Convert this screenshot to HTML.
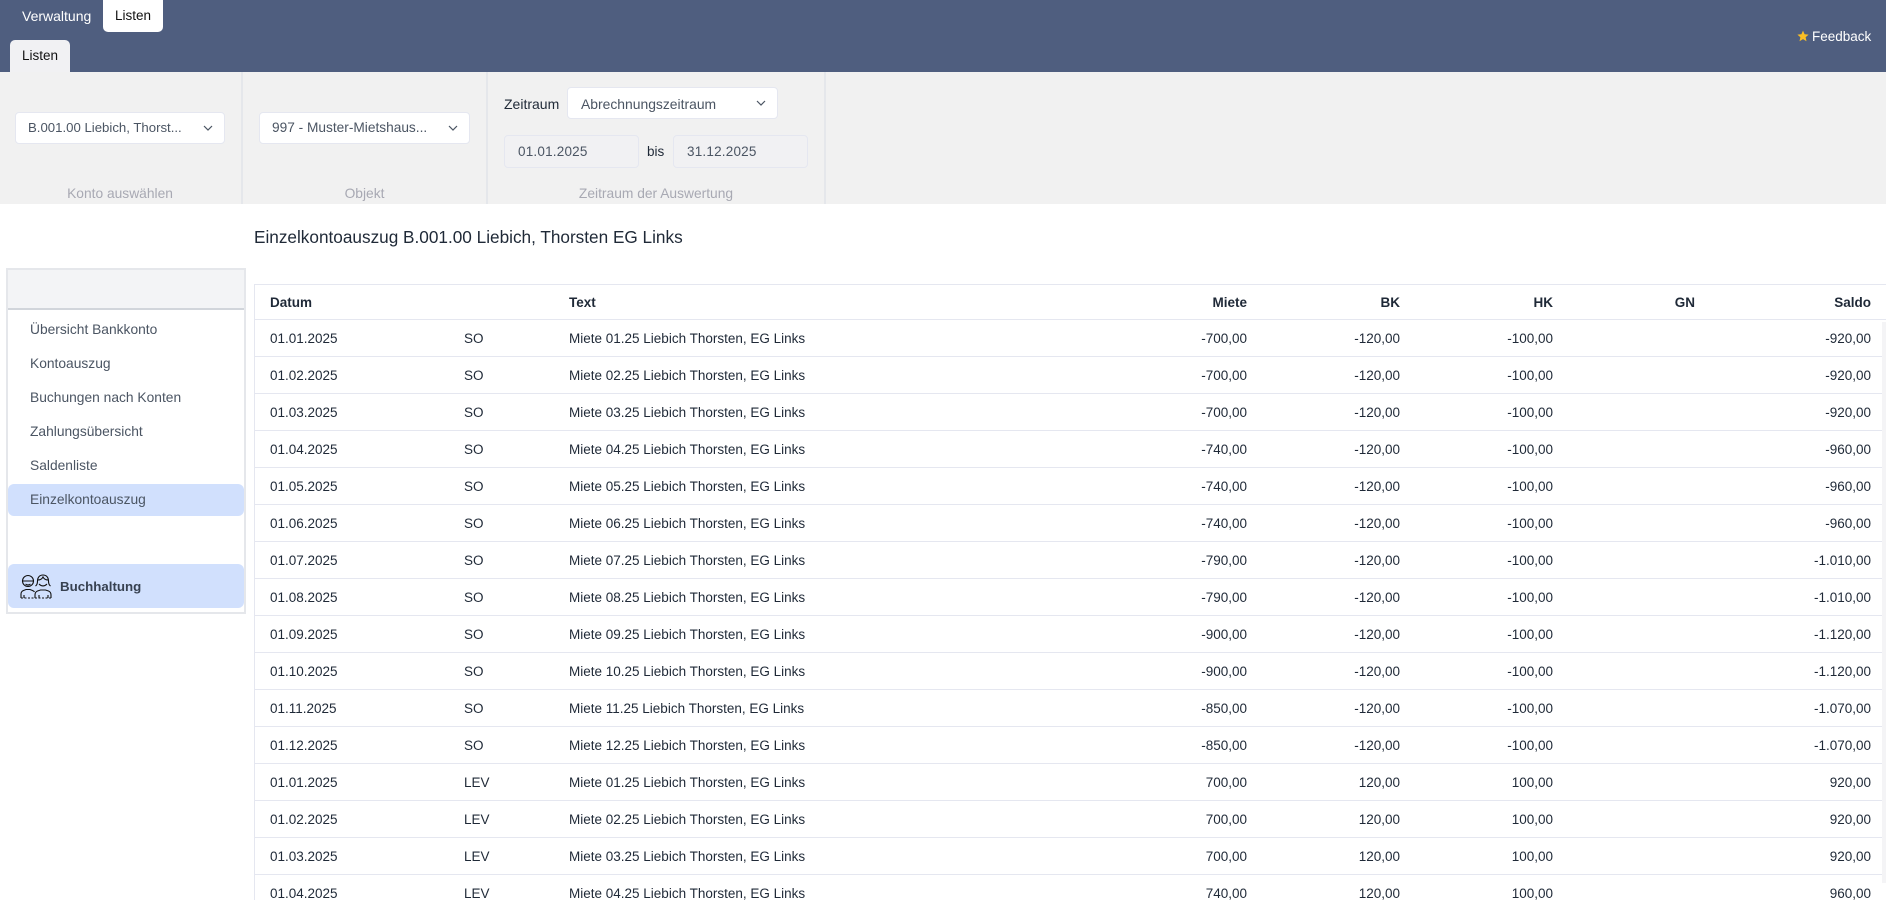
<!DOCTYPE html>
<html lang="de">
<head>
<meta charset="utf-8">
<title>Einzelkontoauszug</title>
<style>
*{box-sizing:border-box}
html,body{margin:0;padding:0;width:1886px;height:900px;overflow:hidden;background:#fff}
body{font-family:"Liberation Sans",sans-serif;font-size:13.5px;color:#1f2937;position:relative}
.a{position:absolute;white-space:nowrap}
.sel{position:absolute;background:#fff;border:1px solid #e5e7f0;border-radius:4px;height:32px;line-height:30px;padding-left:12px;color:#4b5563;font-size:13.2px}
.sel svg{position:absolute;right:11px;top:11px}
.inp{position:absolute;background:#f1f1f3;border:1px solid #e5e7f0;border-radius:4px;width:135px;height:33px;line-height:31px;padding-left:13px;color:#4b5563;font-size:13.5px;letter-spacing:.2px}
.cap{position:absolute;text-align:center;color:#a8a9b3;font-size:13.8px;top:186px}
.div{position:absolute;top:72px;height:132px;width:2px;background:#e5e7eb}
.nav{position:absolute;left:30px;color:#4b5563;font-size:13.8px;white-space:nowrap}
table{position:absolute;left:254px;top:284px;width:1632px;border-collapse:separate;border-spacing:0;table-layout:fixed;border-top:1px solid #e5e7f0;border-left:1px solid #e5e7f0}
th,td{padding:0 14px 0 15px;height:37px;border-bottom:1px solid #e5e7f0;text-align:left;white-space:nowrap;font-size:13.5px;color:#1f2937;overflow:hidden}
th{height:35px;font-weight:bold;color:#1f2937}
.r{text-align:right}
th:last-child,td:last-child{padding-right:16px}
</style>
</head>
<body>
<div class="a" style="left:0;top:0;width:1886px;height:72px;background:#4f5e7f"></div>
<div class="a" style="left:22px;top:8px;color:#fff;font-size:14px">Verwaltung</div>
<div class="a" style="left:103px;top:0;width:60px;height:32px;background:#fff;border-radius:0 0 5px 5px;text-align:center;line-height:32px;color:#111;font-size:13.5px">Listen</div>
<div class="a" style="left:10px;top:40px;width:60px;height:32px;background:#f1f1f3;border-radius:5px 5px 0 0;text-align:center;line-height:32px;color:#111;font-size:13.5px">Listen</div>
<svg class="a" style="left:1797px;top:30px" width="12" height="12" viewBox="0 0 12 12"><path d="M6 .6 7.600 4.300 11.600 4.600 8.600 7.200 9.500 11.200 6 9.100 2.500 11.200 3.400 7.200 .4 4.600 4.400 4.300Z" fill="#fbbf24"/></svg>
<div class="a" style="left:1812px;top:29px;color:#fff;font-size:13.5px">Feedback</div>

<div class="a" style="left:0;top:72px;width:1886px;height:132px;background:#f1f1f1"></div>
<div class="div" style="left:241px"></div>
<div class="div" style="left:486px"></div>
<div class="div" style="left:824px"></div>

<div class="sel" style="left:15px;top:112px;width:210px">B.001.00 Liebich, Thorst...<svg width="10" height="8" viewBox="0 0 10 8"><path d="M1 2 5 6 9 2" fill="none" stroke="#4b5563" stroke-width="1.2"/></svg></div>
<div class="sel" style="left:259px;top:112px;width:211px;font-size:13.7px">997 - Muster-Mietshaus...<svg width="10" height="8" viewBox="0 0 10 8"><path d="M1 2 5 6 9 2" fill="none" stroke="#4b5563" stroke-width="1.2"/></svg></div>
<div class="a" style="left:504px;top:96px;color:#1f2937;font-size:14px">Zeitraum</div>
<div class="sel" style="left:567px;top:87px;width:211px;font-size:13.9px;line-height:32px;padding-left:13px">Abrechnungszeitraum<svg width="10" height="8" viewBox="0 0 10 8"><path d="M1 2 5 6 9 2" fill="none" stroke="#4b5563" stroke-width="1.2"/></svg></div>
<div class="inp" style="left:504px;top:135px">01.01.2025</div>
<div class="a" style="left:647px;top:144px;color:#1f2937;font-size:13.5px">bis</div>
<div class="inp" style="left:673px;top:135px">31.12.2025</div>
<div class="cap" style="left:0;width:240px">Konto auswählen</div>
<div class="cap" style="left:243px;width:243px">Objekt</div>
<div class="cap" style="left:488px;width:336px">Zeitraum der Auswertung</div>

<div class="a" style="left:254px;top:227px;font-size:17.2px;color:#1f2937">Einzelkontoauszug B.001.00 Liebich, Thorsten EG Links</div>

<div class="a" style="left:6px;top:268px;width:240px;height:346px;border:2px solid #e5e7eb;background:#fff"></div>
<div class="a" style="left:8px;top:270px;width:236px;height:40px;background:#f3f4f6;border-bottom:2px solid #d1d5db"></div>
<div class="nav" style="top:322px">Übersicht Bankkonto</div>
<div class="nav" style="top:356px">Kontoauszug</div>
<div class="nav" style="top:390px">Buchungen nach Konten</div>
<div class="nav" style="top:424px">Zahlungsübersicht</div>
<div class="nav" style="top:458px">Saldenliste</div>
<div class="a" style="left:8px;top:484px;width:236px;height:32px;background:#d1e0fd;border-radius:6px"></div>
<div class="nav" style="top:492px">Einzelkontoauszug</div>
<div class="a" style="left:8px;top:564px;width:236px;height:44px;background:#d1e0fd;border-radius:6px"></div>
<svg class="a" style="left:20px;top:574px" width="33" height="25" viewBox="20 574 33 25" fill="none" stroke="#111" stroke-width="1.1">
<circle cx="28" cy="581" r="5.500"/><path d="M22.500 581h11M25.500 584q2.500 2 5 0"/>
<path d="M21 598v-4q0-2.500 2.500-3.500l2.500-1h4l2.500 1q1.500.6 2 1.500M24 598v-3"/>
<path d="M43 575c-3.500 0-5.500 2.500-5.500 6 0 2.500-.5 4-2 5M43 575c3.500 0 5.500 2.500 5.500 6 0 2.500.5 4 2 5M38 580c2 0 4-1 5-3 1 2 3 3 5 3M39 584q4 4 8 0"/>
<path d="M35 598v-3q0-3 2.500-4l3-1h5l3 1q2.500 1 2.500 4v3M39 598v-3M48 598v-3"/>
<path d="M21 598H52" stroke-dasharray="2 1.500"/>
</svg>
<div class="a" style="left:60px;top:579px;font-weight:bold;color:#374151;font-size:13.3px">Buchhaltung</div>

<table>
<colgroup><col style="width:194px"><col style="width:105px"><col style="width:566px"><col style="width:141px"><col style="width:153px"><col style="width:153px"><col style="width:142px"><col style="width:178px"></colgroup>
<tr><th>Datum</th><th></th><th>Text</th><th class="r">Miete</th><th class="r">BK</th><th class="r">HK</th><th class="r">GN</th><th class="r">Saldo</th></tr>
<tr><td>01.01.2025</td><td>SO</td><td>Miete 01.25 Liebich Thorsten, EG Links</td><td class="r">-700,00</td><td class="r">-120,00</td><td class="r">-100,00</td><td></td><td class="r">-920,00</td></tr>
<tr><td>01.02.2025</td><td>SO</td><td>Miete 02.25 Liebich Thorsten, EG Links</td><td class="r">-700,00</td><td class="r">-120,00</td><td class="r">-100,00</td><td></td><td class="r">-920,00</td></tr>
<tr><td>01.03.2025</td><td>SO</td><td>Miete 03.25 Liebich Thorsten, EG Links</td><td class="r">-700,00</td><td class="r">-120,00</td><td class="r">-100,00</td><td></td><td class="r">-920,00</td></tr>
<tr><td>01.04.2025</td><td>SO</td><td>Miete 04.25 Liebich Thorsten, EG Links</td><td class="r">-740,00</td><td class="r">-120,00</td><td class="r">-100,00</td><td></td><td class="r">-960,00</td></tr>
<tr><td>01.05.2025</td><td>SO</td><td>Miete 05.25 Liebich Thorsten, EG Links</td><td class="r">-740,00</td><td class="r">-120,00</td><td class="r">-100,00</td><td></td><td class="r">-960,00</td></tr>
<tr><td>01.06.2025</td><td>SO</td><td>Miete 06.25 Liebich Thorsten, EG Links</td><td class="r">-740,00</td><td class="r">-120,00</td><td class="r">-100,00</td><td></td><td class="r">-960,00</td></tr>
<tr><td>01.07.2025</td><td>SO</td><td>Miete 07.25 Liebich Thorsten, EG Links</td><td class="r">-790,00</td><td class="r">-120,00</td><td class="r">-100,00</td><td></td><td class="r">-1.010,00</td></tr>
<tr><td>01.08.2025</td><td>SO</td><td>Miete 08.25 Liebich Thorsten, EG Links</td><td class="r">-790,00</td><td class="r">-120,00</td><td class="r">-100,00</td><td></td><td class="r">-1.010,00</td></tr>
<tr><td>01.09.2025</td><td>SO</td><td>Miete 09.25 Liebich Thorsten, EG Links</td><td class="r">-900,00</td><td class="r">-120,00</td><td class="r">-100,00</td><td></td><td class="r">-1.120,00</td></tr>
<tr><td>01.10.2025</td><td>SO</td><td>Miete 10.25 Liebich Thorsten, EG Links</td><td class="r">-900,00</td><td class="r">-120,00</td><td class="r">-100,00</td><td></td><td class="r">-1.120,00</td></tr>
<tr><td>01.11.2025</td><td>SO</td><td>Miete 11.25 Liebich Thorsten, EG Links</td><td class="r">-850,00</td><td class="r">-120,00</td><td class="r">-100,00</td><td></td><td class="r">-1.070,00</td></tr>
<tr><td>01.12.2025</td><td>SO</td><td>Miete 12.25 Liebich Thorsten, EG Links</td><td class="r">-850,00</td><td class="r">-120,00</td><td class="r">-100,00</td><td></td><td class="r">-1.070,00</td></tr>
<tr><td>01.01.2025</td><td>LEV</td><td>Miete 01.25 Liebich Thorsten, EG Links</td><td class="r">700,00</td><td class="r">120,00</td><td class="r">100,00</td><td></td><td class="r">920,00</td></tr>
<tr><td>01.02.2025</td><td>LEV</td><td>Miete 02.25 Liebich Thorsten, EG Links</td><td class="r">700,00</td><td class="r">120,00</td><td class="r">100,00</td><td></td><td class="r">920,00</td></tr>
<tr><td>01.03.2025</td><td>LEV</td><td>Miete 03.25 Liebich Thorsten, EG Links</td><td class="r">700,00</td><td class="r">120,00</td><td class="r">100,00</td><td></td><td class="r">920,00</td></tr>
<tr><td>01.04.2025</td><td>LEV</td><td>Miete 04.25 Liebich Thorsten, EG Links</td><td class="r">740,00</td><td class="r">120,00</td><td class="r">100,00</td><td></td><td class="r">960,00</td></tr>
</table>
<div class="a" style="left:1882px;top:322px;width:4px;height:561px;background:#f4f4f6"></div>
</body>
</html>
